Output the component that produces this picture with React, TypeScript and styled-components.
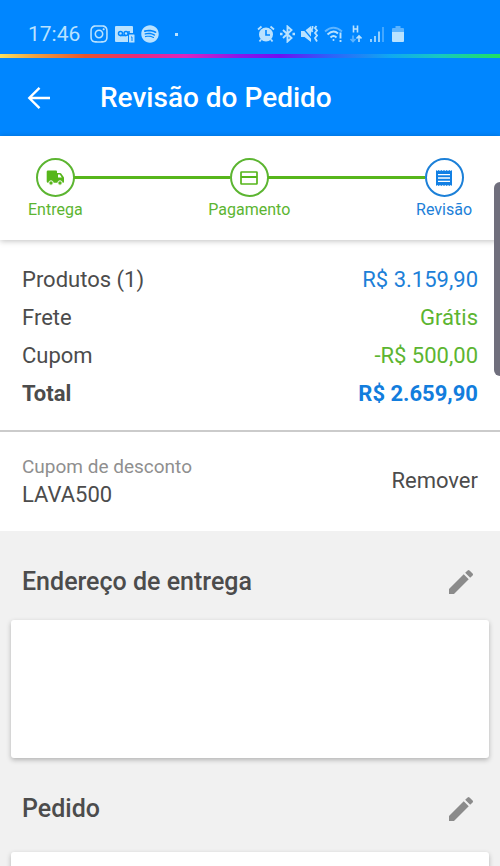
import React from "react";
import styled, { createGlobalStyle } from "styled-components";
import { FaInstagram, FaSpotify } from "react-icons/fa";
import { MdEdit } from "react-icons/md";

const GREEN = "#5cb531";
const BLUE = "#1c80d8";

const GlobalStyle = createGlobalStyle`
  *, *::before, *::after { box-sizing: border-box; }
  body { margin: 0; background: #f1f1f1; }
  h1, h2, p, dl, dd, ol { margin: 0; padding: 0; }
  button { border: 0; padding: 0; background: none; font: inherit; color: inherit; cursor: pointer; }
`;

const Page = styled.div`
  height: 100vh;
  overflow-y: auto;
  scrollbar-width: none;
  background: #f1f1f1;
  color: #4c4c4c;
  font-family: Roboto, "Liberation Sans", sans-serif;
  font-size: 22px;
  line-height: 28px;
`;

const TopArea = styled.div`
  background: #0086ff;
  color: #fff;
`;

const StatusBar = styled.div`
  display: flex;
  align-items: center;
  height: 54px;
  padding: 14px 96px 0 28px;
  color: #b9e2ff;
  font-size: 21px;
  line-height: 24px;
  svg { flex: none; display: block; }
`;

const Notifications = styled.div`
  display: flex;
  align-items: center;
  gap: 6px;
  margin-left: 9px;
`;

const NotificationDot = styled.span`
  width: 3px;
  height: 3px;
  margin-left: 10px;
  background: currentColor;
`;

const SystemIcons = styled.div`
  display: flex;
  align-items: center;
  gap: 4px;
  margin-left: auto;
`;

const RainbowLine = styled.div`
  height: 4px;
  background: linear-gradient(90deg, #f8e060 0%, #f0a040 7%, #e8542c 17%, #e82c78 27%, #dc24c0 37%, #8a18e8 48%, #7010f0 56%, #3060f8 66%, #10a8f0 78%, #18c8c0 88%, #20e060 100%);
`;

const AppBar = styled.header`
  display: flex;
  align-items: center;
  gap: 47px;
  height: 78px;
  padding: 2px 25px 0;
`;

const IconButton = styled.button`
  display: flex;
  flex: none;
`;

const Title = styled.h1`
  font-size: 28px;
  line-height: 32px;
  font-weight: 500;
`;

const StepperPanel = styled.nav`
  position: relative;
  height: 104px;
  padding: 22px 28px 0;
  background: #fff;
  box-shadow: 0 1px 6px rgba(0, 0, 0, 0.25);
`;

const Steps = styled.ol`
  display: flex;
  list-style: none;
`;

const Step = styled.li<{ $color: string }>`
  display: flex;
  flex-direction: column;
  align-items: center;
  color: ${(p) => p.$color};
  font-size: 16px;
  line-height: 26px;
`;

const StepCircle = styled.span`
  display: flex;
  align-items: center;
  justify-content: center;
  width: 39px;
  height: 39px;
  border: 2px solid currentColor;
  border-radius: 50%;
`;

const Connector = styled.li<{ $before: number; $after: number }>`
  flex: 1;
  height: 3px;
  margin: 18px -${(p) => p.$after}px 0 -${(p) => p.$before}px;
  background: #57b61b;
`;

const Summary = styled.dl`
  padding: 21px 22px 17px;
  background: #fff;
  border-bottom: 2px solid #cbcbcb;
`;

const SummaryRow = styled.div<{ $strong?: boolean }>`
  display: flex;
  justify-content: space-between;
  padding: 5px 0;
  font-weight: ${(p) => (p.$strong ? 700 : 400)};
`;

const Amount = styled.dd<{ $color: string }>`
  color: ${(p) => p.$color};
`;

const Coupon = styled.section`
  display: flex;
  align-items: center;
  justify-content: space-between;
  height: 99px;
  padding: 0 22px 1px;
  background: #fff;
`;

const CouponLabel = styled.p`
  color: #8f8f8f;
  font-size: 19px;
`;

const SectionHeader = styled.div<{ $spacious?: boolean }>`
  display: flex;
  align-items: center;
  justify-content: space-between;
  padding: 35px 23px ${(p) => (p.$spacious ? 27 : 22)}px 22px;
  color: #8b8b8b;
`;

const SectionTitle = styled.h2`
  color: #4c4c4c;
  font-size: 25px;
  line-height: 32px;
  font-weight: 500;
`;

const Card = styled.div`
  height: 138px;
  margin: 0 11px;
  border-radius: 3px;
  background: #fff;
  box-shadow: 0 2px 5px rgba(0, 0, 0, 0.26);
`;

const EdgeHandle = styled.div`
  position: fixed;
  top: 182px;
  right: 0;
  width: 6px;
  height: 194px;
  border-radius: 6px 0 0 6px;
  background: #706f7d;
`;

const VoicemailIcon = () => (
  <svg width="20" height="18" viewBox="0 0 20 18" aria-hidden="true">
    <path fill="currentColor" d="M1 1h16a1 1 0 0 1 1 1v6h-5v9H1a1 1 0 0 1-1-1V2a1 1 0 0 1 1-1z" />
    <g fill="none" stroke="#0086ff" strokeWidth="1.5">
      <circle cx="5.5" cy="8.5" r="2" />
      <circle cx="11" cy="8.5" r="2" />
      <path d="M5 10.5h6M14 6v4" />
    </g>
    <rect x="14" y="9.5" width="5.5" height="8" rx=".5" fill="currentColor" />
    <path d="M16 12h1v4" fill="none" stroke="#0086ff" />
  </svg>
);

const AlarmIcon = () => (
  <svg width="18" height="18" viewBox="0 0 18 18" fill="none" aria-hidden="true">
    <circle cx="9" cy="9.5" r="7" fill="currentColor" />
    <path d="M1 4.5 4.5 1.5M17 4.5 13.5 1.5M4 14.5 2.5 16.5M14 14.5 15.5 16.5" stroke="currentColor" strokeWidth="1.8" />
    <path d="M9 5v5h4" stroke="#0086ff" strokeWidth="1.6" />
  </svg>
);

const BluetoothIcon = () => (
  <svg width="17" height="18" viewBox="0 0 17 18" fill="none" stroke="currentColor" strokeWidth="1.9" aria-hidden="true">
    <path d="M4 5l8.500 8L8.500 16.500V1.500L12.500 5 4 13" />
    <path d="M1 9h2.500M13.500 9H16" strokeWidth="2.4" />
  </svg>
);

const VibrateIcon = () => (
  <svg width="18" height="18" viewBox="0 0 18 18" aria-hidden="true">
    <path d="M1 6h3.500L11 1v16l-6.500-5H1z" fill="currentColor" />
    <path d="M1 1l12 14" stroke="#0086ff" strokeWidth="1.2" />
    <path d="M12.500 1v2l-1 2 1 2M16.500 1l-1.500 2 2 2.500-2 2.500 2 2.500-2 2.500 2 3.500" fill="none" stroke="currentColor" strokeWidth="1.8" />
  </svg>
);

const WifiIcon = () => (
  <svg width="22" height="18" viewBox="-2 0 22 18" fill="none" stroke="currentColor" strokeWidth="1.9" aria-hidden="true">
    <path d="M1 6.500Q9.500-1 18 6.500" opacity=".5" />
    <path d="M3.500 9.500Q9.500 4 14 8.500M6.500 12.500Q9.500 9.500 12.500 12.500" />
    <circle cx="9.5" cy="15" r="1" fill="currentColor" stroke="none" />
    <path d="M16.500 7.500v6M16.500 15v2" />
  </svg>
);

const DataIcon = () => (
  <svg width="14" height="18" viewBox="-2 0 14 18" fill="none" stroke="currentColor" strokeWidth="1.6" aria-hidden="true">
    <path d="M3.500 .5v7M7.500 .5v7M3.500 4h4" />
    <path d="M3 10.500v6M.5 14 3 16.500 5.500 14" opacity=".5" />
    <path d="M9 17v-6M6.500 13.500 9 11l2.500 2.500" />
  </svg>
);

const SignalIcon = () => (
  <svg width="18" height="18" viewBox="-4 0 18 18" stroke="currentColor" strokeWidth="1.6" aria-hidden="true">
    <path d="M1 14v3M5 11v6M9 6.500V17" />
    <path d="M13 2v15" opacity=".45" />
  </svg>
);

const BatteryIcon = () => (
  <svg width="16" height="18" viewBox="-4 0 16 18" fill="currentColor" aria-hidden="true">
    <path d="M3.500 1h5v2H11a1 1 0 0 1 1 1v3H0V4a1 1 0 0 1 1-1h2.500z" opacity=".5" />
    <path d="M0 7h12v9a1 1 0 0 1-1 1H1a1 1 0 0 1-1-1z" />
  </svg>
);

const BackIcon = () => (
  <svg width="28" height="28" viewBox="0 0 28 28" fill="none" stroke="currentColor" strokeWidth="2.4" aria-hidden="true">
    <path d="M25 14H5M14.500 3.800 4.300 14l10.200 10.200" />
  </svg>
);

const TruckIcon = () => (
  <svg width="20" height="18" viewBox="0 0 20 18" aria-hidden="true">
    <path d="M3 1.500h8q1 0 1 1V4h3.200q.6 0 1 .5l2.500 3.500q.3.400.3 1v4q0 .8-.8.800H3q-1.300 0-1.300-1.300V2.700q0-1.200 1.300-1.200z" fill="#57b61b" />
    <path d="M13 5.500h1.800l2 3H13z" fill="#fff" />
    <circle cx="6" cy="14" r="2.200" fill="#57b61b" stroke="#fff" />
    <circle cx="15" cy="14" r="2.200" fill="#57b61b" stroke="#fff" />
  </svg>
);

const CardIcon = () => (
  <svg width="20" height="18" viewBox="0 0 20 18" fill="none" stroke="#57b61b" strokeWidth="1.7" aria-hidden="true">
    <rect x="2" y="3" width="16" height="12" rx=".5" />
    <path d="M2 8h16" strokeWidth="2" />
  </svg>
);

const ReceiptIcon = () => (
  <svg width="16" height="18" viewBox="0 0 16 18" aria-hidden="true">
    <path d="M0 1l1.300 1L2.700 1 4 2l1.300-1 1.400 1L8 1l1.300 1 1.400-1L12 2l1.300-1 1.400 1L16 1v16l-1.300-1-1.400 1-1.300-1-1.300 1-1.400-1L8 17l-1.300-1-1.400 1L4 16l-1.300 1-1.400-1L0 17z" fill="#1280e4" />
    <path d="M2 5.700h12M2 9h12M2 12.300h12" stroke="#fff" strokeWidth="1.300" />
  </svg>
);

const rows = [
  { label: "Produtos (1)", value: "R$ 3.159,90", color: BLUE },
  { label: "Frete", value: "Grátis", color: GREEN },
  { label: "Cupom", value: "-R$ 500,00", color: GREEN },
  { label: "Total", value: "R$ 2.659,90", color: "#127ddd", strong: true },
];

export default function App() {
  return (
    <>
      <GlobalStyle />
      <Page>
        <TopArea>
          <StatusBar>
            <span>17:46</span>
            <Notifications>
              <FaInstagram size={20} />
              <VoicemailIcon />
              <FaSpotify size={18} />
              <NotificationDot />
            </Notifications>
            <SystemIcons>
              <AlarmIcon />
              <BluetoothIcon />
              <VibrateIcon />
              <WifiIcon />
              <DataIcon />
              <SignalIcon />
              <BatteryIcon />
            </SystemIcons>
          </StatusBar>
          <RainbowLine />
          <AppBar>
            <IconButton type="button" aria-label="Voltar">
              <BackIcon />
            </IconButton>
            <Title>Revisão do Pedido</Title>
          </AppBar>
        </TopArea>
        <StepperPanel>
          <Steps>
            <Step $color={GREEN}>
              <StepCircle><TruckIcon /></StepCircle>
              Entrega
            </Step>
            <Connector $before={9} $after={22} aria-hidden="true" />
            <Step $color={GREEN}>
              <StepCircle><CardIcon /></StepCircle>
              Pagamento
            </Step>
            <Connector $before={22} $after={9} aria-hidden="true" />
            <Step $color={BLUE} aria-current="step">
              <StepCircle><ReceiptIcon /></StepCircle>
              Revisão
            </Step>
          </Steps>
        </StepperPanel>
        <Summary>
          {rows.map((row) => (
            <SummaryRow key={row.label} $strong={row.strong}>
              <dt>{row.label}</dt>
              <Amount $color={row.color}>{row.value}</Amount>
            </SummaryRow>
          ))}
        </Summary>
        <Coupon>
          <div>
            <CouponLabel>Cupom de desconto</CouponLabel>
            <p>LAVA500</p>
          </div>
          <button type="button">Remover</button>
        </Coupon>
        <SectionHeader>
          <SectionTitle>Endereço de entrega</SectionTitle>
          <IconButton type="button" aria-label="Editar endereço de entrega">
            <MdEdit size={32} />
          </IconButton>
        </SectionHeader>
        <Card />
        <SectionHeader $spacious>
          <SectionTitle>Pedido</SectionTitle>
          <IconButton type="button" aria-label="Editar pedido">
            <MdEdit size={32} />
          </IconButton>
        </SectionHeader>
        <Card />
      </Page>
      <EdgeHandle />
    </>
  );
}
